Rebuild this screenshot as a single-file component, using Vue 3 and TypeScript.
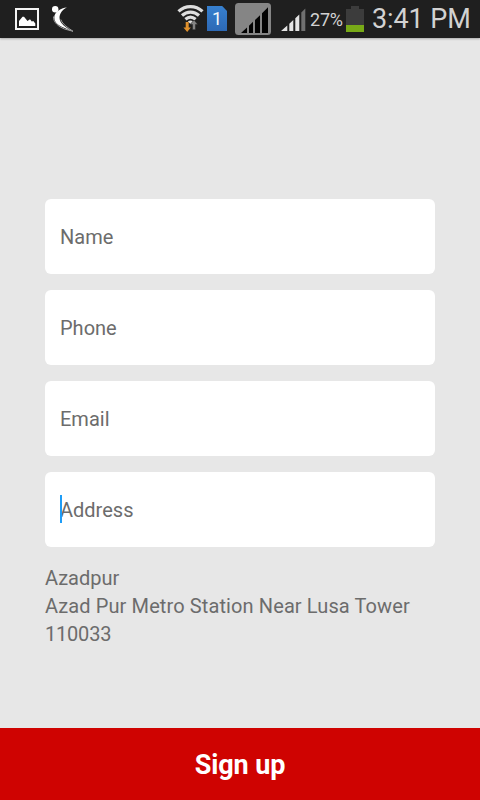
<script setup lang="ts">
import { reactive } from 'vue'

interface Field {
  key: string
  label: string
  focused: boolean
}

const fields: Field[] = [
  { key: 'name', label: 'Name', focused: false },
  { key: 'phone', label: 'Phone', focused: false },
  { key: 'email', label: 'Email', focused: false },
  { key: 'address', label: 'Address', focused: true },
]

const values = reactive<Record<string, string>>({ name: '', phone: '', email: '', address: '' })
</script>

<template>
  <div class="screen">
    <header class="status">
      <svg class="picture" width="24" height="22" viewBox="0 0 24 22">
        <rect x="1" y="1" width="22" height="20" fill="none" stroke="#f4f4f4" stroke-width="2" />
        <path d="M4 18v-5l3.500-4.200h1.500L12.500 13l2.500-1.700 1.800 2.200 1.500-.5 2 2.500V18z" fill="#fff" />
      </svg>
      <svg class="runner" width="24" height="27" viewBox="0 0 24 27">
        <circle cx="4.200" cy="3.300" r="3.200" fill="#fff" />
        <path d="M16 1.500C9.500 2 3.300 6 3.300 11.500c0 5.500 5 8.500 10.500 10.500l6.500 3c-5-3.500-11.800-7.500-11.800-13.200C8.500 7.500 11.500 3.500 16 1.500z" fill="#fff" />
        <path d="M2.500 10.500c-.3 6 5 10 11 12.500l8.500 2.300C17.500 22 11.500 18.500 9.800 13.500" fill="none" stroke="#aaa" stroke-width=".9" />
      </svg>
      <span class="spacer"></span>
      <svg class="wifi" width="28" height="30" viewBox="0 0 28 30">
        <g fill="none" stroke="#dedede" stroke-width="3.200">
          <path d="M1.500 7.400C8.500 1 18.500 1 25.500 7.400" />
          <path d="M5 11.500c5-4.500 12-4.500 17 0" />
          <path d="M8.400 15.300c3.200-2.700 7-2.700 10.200 0" />
        </g>
        <path d="M10.800 17.500c1.600-1.300 3.800-1.300 5.400 0L13.500 20z" fill="#dedede" />
        <path d="M8.700 18h3v5.500h2.100L10.200 28l-3.800-4.500h2.300z" fill="#e0912c" />
        <path d="M15.500 25.700v-5.200h-2.300l3.800-4.500 3.800 4.500h-2.300v5.200z" fill="#858585" stroke="#1f1f1f" stroke-width=".5" />
      </svg>
      <span class="sim">1</span>
      <svg class="signal-box" width="36" height="32" viewBox="0 0 36 32">
        <rect width="36" height="32" rx="3.500" fill="#858585" />
        <path d="M6 30l6-5.500V30zM14 30v-7.300l4-3.900V30zM20 30V16.900l5-4.700V30zM27 30V10.200l6-6V30z" fill="#030303" />
      </svg>
      <svg class="signal" width="25" height="24" viewBox="0 0 25 24">
        <path d="M0 24l6.300-5.500V24zM8.300 24v-7.300l4-3.600V24zM14.300 24V11.300l4-3.800V24z" fill="#e4e4e4" />
        <path d="M20.300 24V5.500l4-4V24z" fill="#707070" />
      </svg>
      <span class="percent">27%</span>
      <svg class="battery" width="18" height="26" viewBox="0 0 18 26">
        <path d="M5 0h8v3h5v23H0V3h5z" fill="#3c3c3c" />
        <path d="M0 19h18v7H0z" fill="#78aa17" />
      </svg>
      <span class="clock">3:41 PM</span>
    </header>

    <main class="form">
      <label v-for="field in fields" :key="field.key" class="field">
        <i v-if="field.focused" class="caret"></i>
        <input v-model="values[field.key]" class="input" type="text" :placeholder="field.label" />
      </label>
      <div class="location">
        <div>Azadpur</div>
        <div class="street">Azad Pur Metro Station Near Lusa Tower</div>
        <div class="pin">110033</div>
      </div>
    </main>

    <button class="submit" type="button">Sign up</button>
  </div>
</template>

<style>
body {
  margin: 0;
  background: #e7e7e7;
}
</style>

<style scoped>
.screen {
  display: flex;
  flex-direction: column;
  width: 480px;
  height: 800px;
  overflow: hidden;
  background: #e7e7e7;
  font-family: Roboto, sans-serif;
}

.status {
  display: flex;
  align-items: flex-start;
  flex: none;
  box-sizing: border-box;
  height: 38px;
  padding: 0 10px 0 15px;
  background: #1f1f1f;
  box-shadow: 0 1px 2px #aaa;
}

.status svg {
  display: block;
  flex: none;
}

.picture {
  margin-top: 8px;
}

.runner {
  margin: 6px 0 0 12px;
}

.spacer {
  flex: 1;
}

.wifi {
  margin-top: 4px;
}

.sim {
  flex: none;
  width: 20px;
  height: 25px;
  margin: 6px 0 0 2px;
  background: linear-gradient(#3780cf, #2d69b5);
  clip-path: polygon(0 0, 76% 0, 100% 20%, 100% 100%, 0 100%);
  color: #f4f7fb;
  font-size: 18px;
  line-height: 26px;
  text-align: center;
}

.signal-box {
  margin: 3px 0 0 8px;
}

.signal {
  margin: 7px 0 0 10px;
}

.percent {
  flex: none;
  width: 36px;
  margin: 8px 0 0 4px;
  color: #d2d2d2;
  font-size: 18px;
  letter-spacing: -0.2px;
  line-height: 23px;
  white-space: nowrap;
}

.battery {
  margin-top: 6px;
}

.clock {
  flex: none;
  width: 98px;
  margin: 2px 0 0 8px;
  color: #d2d2d2;
  font-size: 27px;
  letter-spacing: -0.1px;
  line-height: 34px;
  white-space: nowrap;
}

.form {
  display: flex;
  flex: 1;
  flex-direction: column;
  gap: 16px;
  padding: 161px 45px 0;
}

.field {
  position: relative;
  display: flex;
  height: 75px;
  background: #fff;
  border-radius: 6px;
}

.input {
  flex: 1;
  min-width: 0;
  padding: 1px 15px 0;
  border: 0;
  outline: 0;
  background: transparent;
  color: #333;
  font-family: inherit;
  font-size: 20px;
}

.input::placeholder {
  color: #6c6c6c;
  opacity: 1;
}

.caret {
  position: absolute;
  top: 23px;
  left: 15px;
  width: 2px;
  height: 28px;
  background: #1e9df7;
}

.location {
  padding-top: 1px;
  color: #6c6c6c;
  font-size: 20px;
  line-height: 28px;
  white-space: nowrap;
}

.street {
  letter-spacing: 0.11px;
}

.pin {
  letter-spacing: -0.2px;
}

.submit {
  flex: none;
  height: 72px;
  padding: 2px 0 0;
  border: 0;
  background: #cf0301;
  color: #fff;
  font-family: inherit;
  font-size: 27px;
  font-weight: 700;
  letter-spacing: -0.1px;
  text-align: center;
}
</style>
